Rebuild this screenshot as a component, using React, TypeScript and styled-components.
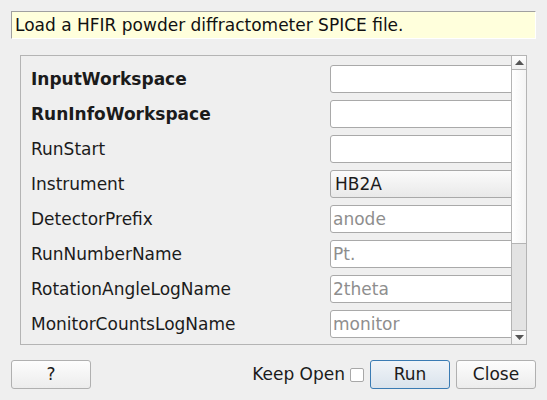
import React from "react";
import styled, { createGlobalStyle } from "styled-components";

const GlobalStyle = createGlobalStyle`
  html, body {
    margin: 0;
    padding: 0;
    background: #efefef;
  }
  body {
    font-family: "DejaVu Sans", "Liberation Sans", sans-serif;
    font-size: 17px;
    color: #1b1b1b;
  }
`;

const Dialog = styled.div`
  width: 547px;
  height: 400px;
  box-sizing: border-box;
  padding: 11px 11px 0 11px;
  display: flex;
  flex-direction: column;
  background: #efefef;
`;

const Description = styled.div`
  height: 28px;
  box-sizing: border-box;
  background: #ffffdc;
  border-top: 1px solid #a0a0a0;
  border-left: 1px solid #a0a0a0;
  border-right: 1px solid #ffffff;
  border-bottom: 1px solid #ffffff;
  padding: 0 3px;
  display: flex;
  align-items: center;
  color: #111;
`;

const ScrollFrame = styled.div`
  margin: 16px 9px 0 9px;
  height: 290px;
  box-sizing: border-box;
  border: 1px solid #b4b4b4;
  display: flex;
`;

const Viewport = styled.div`
  flex: 1;
  overflow: hidden;
  display: flex;
  flex-direction: column;
  gap: 7px;
  padding: 9px 0 0 10px;
`;

const Row = styled.div`
  display: grid;
  grid-template-columns: 299px 200px;
  align-items: center;
  height: 28px;
`;

const Label = styled.div<{ $bold?: boolean }>`
  font-weight: ${(p) => (p.$bold ? 700 : 400)};
  white-space: nowrap;
`;

const Field = styled.div<{ $placeholder?: boolean }>`
  height: 28px;
  box-sizing: border-box;
  border: 1px solid #a9a9a9;
  border-radius: 3px;
  background: #ffffff;
  padding: 0 2px;
  display: flex;
  align-items: center;
  color: ${(p) => (p.$placeholder ? "#8e8e8e" : "#1b1b1b")};
`;

const Combo = styled(Field)`
  background: linear-gradient(#fbfbfb, #e9e9e9);
  padding-left: 4px;
`;

const ScrollBar = styled.div`
  width: 14px;
  border-left: 1px solid #b4b4b4;
  display: flex;
  flex-direction: column;
  background: #e3e3e3;
`;

const ArrowButton = styled.div<{ $down?: boolean }>`
  height: 13px;
  background: linear-gradient(#fdfdfd, #f0f0f0);
  ${(p) => (p.$down ? "border-top" : "border-bottom")}: 1px solid #b4b4b4;
  display: flex;
  align-items: center;
  justify-content: center;
`;

const Handle = styled.div`
  height: 173px;
  background: linear-gradient(90deg, #ffffff, #f4f4f4);
  border-bottom: 1px solid #b4b4b4;
`;

const Track = styled.div`
  flex: 1;
`;

const Footer = styled.div`
  margin-top: 15px;
  display: flex;
  align-items: center;
  height: 28px;
`;

const Button = styled.button<{ $default?: boolean }>`
  width: 80px;
  height: 29px;
  box-sizing: border-box;
  border: 1px solid ${(p) => (p.$default ? "#3a7bb3" : "#b0b0b0")};
  border-radius: 3px;
  background: ${(p) =>
    p.$default
      ? "linear-gradient(#f0f4f8, #dae3ec)"
      : "linear-gradient(#fdfdfd, #ececec)"};
  font-family: "DejaVu Sans", "Liberation Sans", sans-serif;
  font-size: 17px;
  color: #1b1b1b;
  padding: 0;
  margin: 0;
`;

const Spacer = styled.div`
  flex: 1;
`;

const KeepOpen = styled.label`
  display: flex;
  align-items: center;
  gap: 5px;
  margin-right: 6px;
`;

const CheckBox = styled.span`
  width: 14px;
  height: 14px;
  box-sizing: border-box;
  border: 1px solid #a8a8a8;
  border-radius: 2px;
  background: #ffffff;
  margin-top: 1px;
`;

const Gap = styled.div`
  width: 6px;
`;

const Arrow = ({ down }: { down?: boolean }) => (
  <svg width="9" height="5" viewBox="0 0 9 5">
    {down ? (
      <polygon points="0,0 9,0 4.5,5" fill="#555" />
    ) : (
      <polygon points="0,5 9,5 4.5,0" fill="#555" />
    )}
  </svg>
);

type Prop = {
  name: string;
  bold?: boolean;
  value?: string;
  placeholder?: boolean;
  combo?: boolean;
};

const props: Prop[] = [
  { name: "InputWorkspace", bold: true },
  { name: "RunInfoWorkspace", bold: true },
  { name: "RunStart" },
  { name: "Instrument", value: "HB2A", combo: true },
  { name: "DetectorPrefix", value: "anode", placeholder: true },
  { name: "RunNumberName", value: "Pt.", placeholder: true },
  { name: "RotationAngleLogName", value: "2theta", placeholder: true },
  { name: "MonitorCountsLogName", value: "monitor", placeholder: true },
];

export default function App() {
  return (
    <>
      <GlobalStyle />
      <Dialog>
        <Description>Load a HFIR powder diffractometer SPICE file.</Description>
        <ScrollFrame>
          <Viewport>
            {props.map((p) => (
              <Row key={p.name}>
                <Label $bold={p.bold}>{p.name}</Label>
                {p.combo ? (
                  <Combo>{p.value}</Combo>
                ) : (
                  <Field $placeholder={p.placeholder}>{p.value ?? ""}</Field>
                )}
              </Row>
            ))}
          </Viewport>
          <ScrollBar>
            <ArrowButton>
              <Arrow />
            </ArrowButton>
            <Handle />
            <Track />
            <ArrowButton $down>
              <Arrow down />
            </ArrowButton>
          </ScrollBar>
        </ScrollFrame>
        <Footer>
          <Button>?</Button>
          <Spacer />
          <KeepOpen>
            Keep Open
            <CheckBox />
          </KeepOpen>
          <Button $default>Run</Button>
          <Gap />
          <Button>Close</Button>
        </Footer>
      </Dialog>
    </>
  );
}
